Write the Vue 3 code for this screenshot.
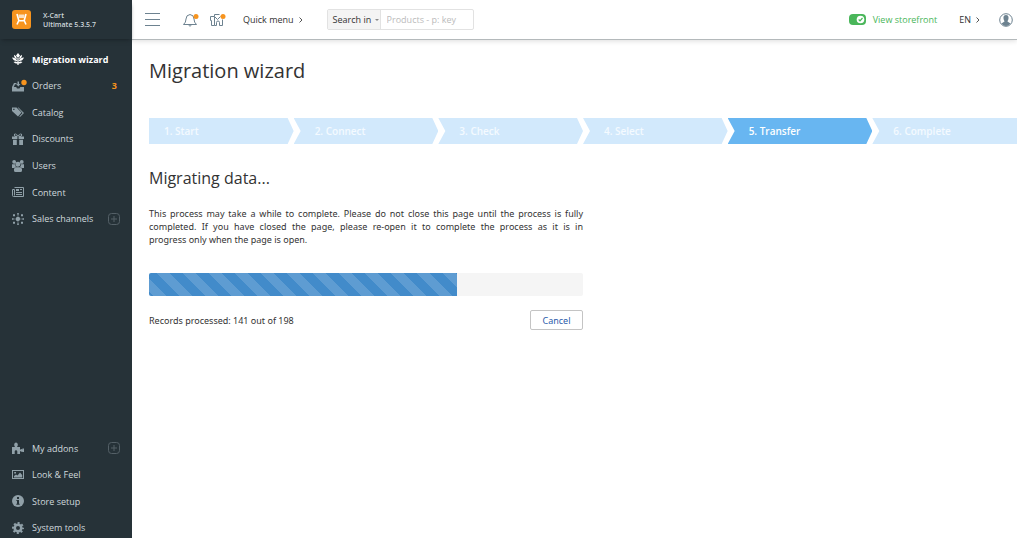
<script setup>
const topItems = [
  { label: 'Migration wizard', icon: 'leaf', active: true },
  { label: 'Orders', icon: 'orders', count: 3, dot: true },
  { label: 'Catalog', icon: 'tags' },
  { label: 'Discounts', icon: 'gift' },
  { label: 'Users', icon: 'users' },
  { label: 'Content', icon: 'content' },
  { label: 'Sales channels', icon: 'hub', plus: true },
]
const bottomItems = [
  { label: 'My addons', icon: 'puzzle', plus: true },
  { label: 'Look & Feel', icon: 'image' },
  { label: 'Store setup', icon: 'info' },
  { label: 'System tools', icon: 'gear' },
]
const groups = [
  { name: 'primary', items: topItems },
  { name: 'secondary', items: bottomItems },
]
const steps = ['Start', 'Connect', 'Check', 'Select', 'Transfer', 'Complete']
const currentStep = 5
const processed = 141
const total = 198
const percent = Math.floor((processed / total) * 100)

const solid = {
  leaf: 'M6 0L8 2.4 6 5 4 2.4ZM2 1.8Q4.6 2.8 5 6 2 5.600 2 1.800ZM10 1.800Q10 5.600 7 6 7.400 2.800 10 1.800ZM0 4.500Q4 4.500 5.400 8 1.600 8.400 0 4.500ZM12 4.500Q10.400 8.400 6.600 8 8 4.500 12 4.500ZM1.500 9Q4 8 5.400 9.300V5H6.600V9.300Q8 8 10.500 9 8.500 11 6.600 10.500V12H5.400V10.500Q3.500 11 1.500 9Z',
  orders: 'M2 3H4.500V4.200H3L1.800 7H4.200L5 8.500H7.500L8.300 7H12V11.500H0V7ZM5.500 1.500H7V4H8.500L6.300 6.500 4.200 4H5.500Z',
  tags: 'M0 1.500L4.500 1.500 9.500 6.500 6 10.500 0 5ZM5.700 1.500H6.500L12 7 8 11 7.300 10.400 10.500 7ZM1.200 2.700V4H2.500V2.700Z',
  gift: 'M0 3.500H5.400V6H0ZM6.600 3.500H12V6H6.600ZM1 6.700H4.800V12H1ZM7.200 6.700H11V12H7.200ZM5.500 3.500H3Q1.300 2.500 2 1 4-.5 5.500 2 5.700 2.200 6 2.800 6.200 2.200 6.500 2 8-.5 10 1 10.700 2.500 9 3.500H6.500V2.800H9V1.400Q7.500 1 6.800 3H5.200Q4.500 1 3 1.400V2.800H5.500Z',
  users: 'M2.200 0A1.900 1.900 0 1 1 2.100 3.800 1.900 1.900 0 0 1 2.200 0ZM9.800 0A1.900 1.900 0 1 1 9.700 3.800 1.900 1.900 0 0 1 9.800 0ZM6 1.800A2.500 2.500 0 1 1 5.900 6.800 2.500 2.500 0 0 1 6 1.800ZM0 4.200H3Q3 6 4 7L2 8H0ZM12 4.200H9Q9 6 8 7L10 8H12ZM2 9Q2.500 7.200 4.300 7.200H7.700Q9.500 7.200 10 9V10.500Q10 12 8.500 12H3.500Q2 12 2 10.500Z',
  hub: 'M6 3.800A2.200 2.200 0 1 1 5.900 8.200 2.200 2.200 0 0 1 6 3.800ZM5.200 0H6.800V1.700H5.200ZM5.200 10.300H6.800V12H5.200ZM0 5.200H1.700V6.800H0ZM10.300 5.200H12V6.800H10.300ZM1 1.300H3V3.300H1ZM9 1.300H11V3.300H9ZM1 8.700H3V10.700H1ZM9 8.700H11V10.700H9ZM5.700 2H6.300V10H5.700ZM2 5.700H10V6.300H2Z',
  puzzle: 'M0 5H3Q2 3.800 2.200 2.300 2.500.5 4 .5T5.800 2.300Q6 3.800 5 5H8V7.700Q9.500 6.700 10.400 7.400V6.600H12V10H10.400V9.400Q9.500 10 8 9V12H5.300V9.600Q5.300 8.300 4 8.300T2.700 9.600V12H0Z',
}
</script>

<template>
  <div class="page">
    <aside class="sidebar">
      <a class="brand" href="#">
        <svg class="logo" viewBox="0 0 19 19" aria-hidden="true">
          <rect width="19" height="19" rx="3" fill="#f7941e" />
          <path d="M6.500 4.500H12.500L12 8H7Z" fill="#fce0bd" />
          <path d="M5 4L6.800 10.500 5 14.500M14 4L12.200 10.500 14 14.500M6.500 10.800H12.500" fill="none" stroke="#fff" stroke-width="1.600" />
        </svg>
        <span>X-Cart<br>Ultimate 5.3.5.7</span>
      </a>
      <nav class="menus" aria-label="Main">
        <ul v-for="group in groups" :key="group.name" class="menu" :class="group.name">
          <li v-for="item in group.items" :key="item.label" class="item" :class="{ active: item.active }">
            <a class="link" href="#">
              <svg class="icon" viewBox="0 0 12 12" aria-hidden="true">
                <path v-if="solid[item.icon]" :d="solid[item.icon]" fill="currentColor" fill-rule="nonzero" />
                <g v-else-if="item.icon === 'content'" fill="none" stroke="currentColor">
                  <path d="M2.500 1.500H11.500V10.500H1.500Q.5 10.500.5 9.500V3.500H2.500V9.500" />
                  <path d="M4 6.500H10M4 8.500H10M8 3.500H10" />
                  <path d="M4 4H7" stroke-width="2" />
                </g>
                <g v-else-if="item.icon === 'image'">
                  <rect x=".5" y="1.500" width="11" height="8" fill="none" stroke="currentColor" />
                  <path d="M2 8.500V7L4 5.500 5.500 6.500 8 3.500 10.200 6V8.500ZM2.200 3H4V4.500H2.200Z" fill="currentColor" />
                </g>
                <g v-else-if="item.icon === 'info'">
                  <circle cx="6" cy="6" r="6" fill="currentColor" />
                  <path d="M5 2H7V4H5ZM4.400 5H7V8.700H7.700V9.800H4.300V8.700H5V6.100H4.400Z" fill="#263238" />
                </g>
                <g v-else fill="none" stroke="currentColor">
                  <circle cx="6" cy="6" r="3.300" stroke-width="2.600" />
                  <circle cx="6" cy="6" r="5" stroke-width="2" stroke-dasharray="2 1.927" stroke-dashoffset="1" />
                </g>
                <circle v-if="item.dot" class="dot" cx="12" cy="2.500" r="2.700" />
              </svg>
              <span>{{ item.label }}</span>
              <b v-if="item.count" class="count">{{ item.count }}</b>
            </a>
            <button v-if="item.plus" class="plus" type="button" :aria-label="'Add to ' + item.label">
              <svg viewBox="0 0 12 12" aria-hidden="true">
                <rect x=".5" y=".5" width="11" height="11" rx="3" />
                <path d="M3 6H9M6 3V9" />
              </svg>
            </button>
          </li>
        </ul>
      </nav>
    </aside>

    <div class="body">
      <header class="topbar">
        <button class="tool burger" type="button" aria-label="Toggle menu">
          <svg viewBox="0 0 15 13" aria-hidden="true"><path d="M0 .5H15M0 6.500H15M0 12.500H15" /></svg>
        </button>
        <button class="tool bell" type="button" aria-label="Notifications">
          <svg viewBox="0 0 16 14" aria-hidden="true">
            <path d="M.5 11.500Q3 9.500 3 6 3 2 7 1.500 11 2 11 6 11 9.500 13.500 11.500ZM5.500 12Q7 14.500 8.500 12" />
            <circle class="dot" cx="13" cy="3.500" r="2.500" />
          </svg>
        </button>
        <button class="tool news" type="button" aria-label="Store news">
          <svg viewBox="0 0 16 14" aria-hidden="true">
            <path d="M4.500 12.500H1.500V7.500H.5V3.500H4.500V12.500H6.500V9.500Q6.500 8 8 8T9.500 9.500V12.500H12.500V6.500M4.500 3.500V1.500H9.500M5 4L7.500 6.500 10.500 3.500" />
            <circle class="dot" cx="13" cy="3.500" r="2.500" />
          </svg>
        </button>
        <button class="text-button quick" type="button">
          Quick menu
          <svg class="chevron" viewBox="0 0 4 6" aria-hidden="true"><path d="M.5.5L3 3 .5 5.500" /></svg>
        </button>
        <form class="search" @submit.prevent>
          <button class="scope" type="button">Search in <i class="caret"></i></button>
          <input class="query" type="text" placeholder="Products - p: key" aria-label="Search products">
        </form>
        <a class="storefront" href="#">
          <svg viewBox="0 0 17 11" aria-hidden="true">
            <rect width="17" height="11" rx="4" fill="#49b65a" />
            <circle cx="11.500" cy="5.500" r="3.800" fill="#fff" />
            <path d="M9.700 5.500L11 6.900 13.500 4" fill="none" stroke="#49b65a" stroke-width="1.200" />
          </svg>
          View storefront
        </a>
        <button class="text-button lang" type="button">
          EN
          <svg class="chevron" viewBox="0 0 4 6" aria-hidden="true"><path d="M.5.5L3 3 .5 5.500" /></svg>
        </button>
        <button class="tool account" type="button" aria-label="Account">
          <svg viewBox="0 0 14 14" aria-hidden="true">
            <circle cx="7" cy="7" r="6.300" />
            <path class="person" d="M7 2C9 2 9.800 3.500 9.500 5.500 9.300 7 8.700 7.500 8.500 8.500L11.500 10.500Q9.500 13 7 13T2.500 10.500L5.500 8.500C5.300 7.500 4.700 7 4.500 5.500 4.200 3.500 5 2 7 2Z" />
          </svg>
        </button>
      </header>

      <main class="content">
        <h1>Migration wizard</h1>
        <ol class="steps">
          <li v-for="(step, i) in steps" :key="step" class="step" :class="{ current: i + 1 === currentStep }">
            {{ i + 1 }}. {{ step }}
          </li>
        </ol>
        <section class="panel">
          <h2>Migrating data...</h2>
          <p class="note">This process may take a while to complete. Please do not close this page until the process is fully completed. If you have closed the page, please re-open it to complete the process as it is in <span class="keep">progress only when the page is open.</span></p>
          <div class="progress" role="progressbar" aria-label="Migration progress" :aria-valuenow="percent" aria-valuemin="0" aria-valuemax="100">
            <div class="bar" :style="{ width: percent + '%' }"></div>
          </div>
          <div class="status">
            <span>Records processed: {{ processed }} out of {{ total }}</span>
            <button class="cancel" type="button">Cancel</button>
          </div>
        </section>
      </main>
    </div>
  </div>
</template>

<style>
body {
  margin: 0;
  overflow: hidden;
}
</style>

<style scoped>
.page {
  display: flex;
  min-height: 100vh;
  background: #fff;
  color: #333;
  font: 9px/13px "Open Sans", "Noto Sans", sans-serif;
}
.page * {
  box-sizing: border-box;
}
button,
input {
  margin: 0;
  padding: 0;
  border: 0;
  background: none;
  color: inherit;
  font: inherit;
}
a {
  color: inherit;
  text-decoration: none;
}
svg {
  display: block;
  flex: none;
  overflow: visible;
}
.dot {
  fill: #f7941e;
  stroke: none;
}

.sidebar {
  position: relative;
  z-index: 1;
  display: flex;
  flex: none;
  flex-direction: column;
  width: 132px;
  background: #263238;
  color: #cfd8dc;
}
.brand {
  display: flex;
  align-items: center;
  gap: 12px;
  height: 39px;
  padding-left: 12px;
  box-shadow: 0 3px 4px -2px #1a2328;
  color: #cfd8dc;
  font-size: 7px;
  font-weight: 600;
  line-height: 9px;
}
.logo {
  width: 19px;
  height: 19px;
}
.menus {
  display: flex;
  flex: 1;
  flex-direction: column;
  justify-content: space-between;
  padding-top: 10px;
}
.menu {
  display: grid;
  grid-auto-rows: 20px;
  align-content: space-between;
  margin: 0;
  padding: 0;
  list-style: none;
}
.primary {
  height: 180px;
}
.secondary {
  height: 100px;
}
.item {
  display: flex;
  align-items: center;
  justify-content: space-between;
  padding: 0 12px;
}
.link {
  display: flex;
  flex: 1;
  align-items: center;
  gap: 8px;
}
.icon {
  width: 12px;
  height: 12px;
  color: #90a0a8;
}
.active,
.active .icon {
  color: #fff;
  font-weight: 700;
}
.count {
  margin-left: auto;
  padding-right: 3px;
  color: #f7941e;
}
.plus svg {
  width: 12px;
  height: 12px;
  fill: none;
  stroke: #546067;
}

.body {
  display: flex;
  flex: 1;
  flex-direction: column;
  min-width: 0;
}
.topbar {
  display: flex;
  align-items: center;
  height: 40px;
  padding: 0 4px 0 13px;
  border-bottom: 1px solid #b4b9bb;
  box-shadow: 0 1px 5px #ddd;
}
.tool svg {
  fill: none;
  stroke: #6d8290;
}
.burger svg {
  width: 15px;
  height: 13px;
}
.bell {
  margin-left: 23px;
}
.news {
  margin-left: 11px;
}
.bell svg,
.news svg {
  width: 16px;
  height: 14px;
}
.text-button {
  display: flex;
  align-items: center;
  gap: 5px;
}
.chevron {
  width: 4px;
  height: 6px;
  fill: none;
  stroke: #555;
}
.quick {
  margin-left: 17px;
}
.search {
  display: flex;
  width: 147px;
  height: 21px;
  margin-left: 24px;
  border: 1px solid #e2e2e2;
  border-radius: 2px;
}
.scope {
  display: flex;
  flex: none;
  align-items: center;
  gap: 4px;
  width: 53px;
  padding-left: 5px;
  border-right: 1px solid #e2e2e2;
  background: #f4f4f4;
  white-space: nowrap;
}
.caret {
  border: 2px solid transparent;
  border-top-color: #888;
  border-bottom: 0;
}
.query {
  flex: 1;
  min-width: 0;
  padding-left: 6px;
}
.query::placeholder {
  color: #bbb;
  opacity: 1;
}
.storefront {
  display: flex;
  align-items: center;
  gap: 7px;
  margin-left: auto;
  color: #49b65a;
}
.storefront svg {
  width: 17px;
  height: 11px;
}
.lang {
  margin-left: 22px;
}
.account {
  margin-left: 19px;
}
.account svg {
  width: 14px;
  height: 14px;
}
.account .person {
  fill: #6d8290;
  stroke: none;
}

.content {
  padding-left: 17px;
}
h1,
h2 {
  margin: 0;
  font-weight: 400;
}
h1 {
  padding-top: 18px;
  font-size: 20px;
  line-height: 26px;
}
.steps {
  display: grid;
  grid-template-columns: repeat(6, 1fr);
  margin: 34px 0 0;
  padding: 0;
  list-style: none;
}
.step {
  height: 26px;
  padding-left: 21px;
  background: #d2e9fc;
  clip-path: polygon(0 0, calc(100% - 6px) 0, 100% 50%, calc(100% - 6px) 100%, 0 100%, 7px 50%);
  color: #f4faff;
  font-size: 10px;
  font-weight: 600;
  line-height: 26px;
}
.step:first-child {
  padding-left: 15px;
  clip-path: polygon(0 0, calc(100% - 6px) 0, 100% 50%, calc(100% - 6px) 100%, 0 100%);
}
.step:last-child {
  clip-path: polygon(0 0, 100% 0, 100% 100%, 0 100%, 7px 50%);
}
.step.current {
  background: #68b6f1;
  color: #fff;
}
.panel {
  width: 50%;
  font-family: "Noto Sans", "Open Sans", sans-serif;
}
h2 {
  padding-top: 23px;
  font-family: "Open Sans", "Noto Sans", sans-serif;
  font-size: 16px;
  line-height: 22px;
}
.note {
  margin: 18px 0 0;
  text-align: justify;
}
.keep {
  white-space: nowrap;
}
.progress {
  height: 23px;
  margin-top: 27px;
  overflow: hidden;
  border-radius: 2px;
  background: #f5f5f5;
}
.bar {
  height: 100%;
  background: #428bca linear-gradient(45deg, rgba(255, 255, 255, 0.15) 25%, transparent 25%, transparent 50%, rgba(255, 255, 255, 0.15) 50%, rgba(255, 255, 255, 0.15) 75%, transparent 75%) 7px 0 / 26px 26px;
}
.status {
  display: flex;
  align-items: center;
  justify-content: space-between;
  padding-top: 14px;
}
.cancel {
  width: 53px;
  height: 20px;
  border: 1px solid #c4c4c4;
  border-radius: 2px;
  color: #2a5caa;
}
</style>
